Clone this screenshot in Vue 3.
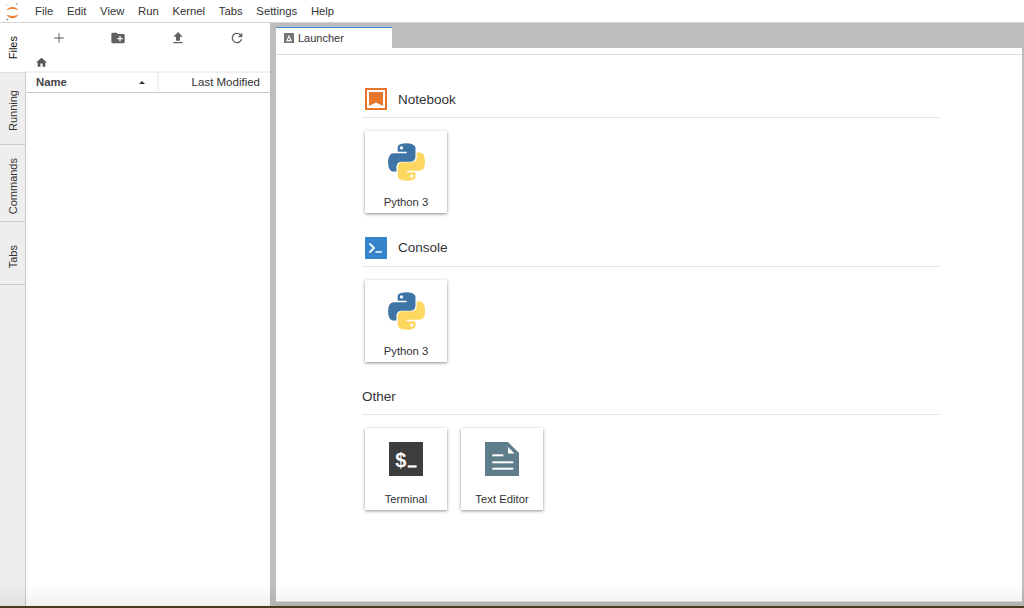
<template>
  <div class="app">
    <header class="menubar">
      <svg class="logo" viewBox="0 0 26 22" width="26" height="22">
        <path d="M6.500 10.500 C8.500 5.800 16.500 5.800 18.500 10.500 C15.500 8.500 9.500 8.500 6.500 10.500Z" fill="#ec8038"/>
        <path d="M6.500 14.300 C8.500 19.500 16.500 19.500 18.500 14.300 C15.500 16.600 9.500 16.600 6.500 14.300Z" fill="#ec8038"/>
        <circle cx="16.700" cy="4" r="0.800" fill="#888"/>
        <circle cx="7.300" cy="19.600" r="0.900" fill="#888"/>
        <circle cx="7" cy="5" r="0.500" fill="#888"/>
      </svg>
      <nav class="menu">
        <span v-for="item in menus" :key="item">{{ item }}</span>
      </nav>
    </header>

    <div class="body">
      <aside class="tabbar">
        <div
          v-for="(tab, i) in sideTabs"
          :key="tab.label"
          class="side-tab"
          :class="{ active: i === 0 }"
          :style="{ height: tab.h + 'px', paddingTop: tab.nudge + 'px' }"
        >
          <span>{{ tab.label }}</span>
        </div>
      </aside>

      <section class="files">
        <div class="toolbar">
          <button>
            <svg viewBox="0 0 24 24" width="16" height="16"><path d="M19 12.700h-6.300V19h-1.400v-6.300H5v-1.400h6.300V5h1.400v6.300H19z" fill="#555"/></svg>
          </button>
          <button>
            <svg viewBox="0 0 24 24" width="16" height="16"><path d="M20 6h-8l-2-2H4c-1.100 0-2 .9-2 2v12c0 1.100.9 2 2 2h16c1.100 0 2-.9 2-2V8c0-1.100-.9-2-2-2zm-1 8h-3v3h-2v-3h-3v-2h3V9h2v3h3v2z" fill="#616161"/></svg>
          </button>
          <button>
            <svg viewBox="0 0 24 24" width="16" height="16"><path d="M9 16h6v-6h4l-7-7-7 7h4zm-4 2h14v2H5z" fill="#616161"/></svg>
          </button>
          <button>
            <svg viewBox="0 0 24 24" width="16" height="16"><path d="M17.650 6.350A7.960 7.960 0 0 0 12 4a8 8 0 1 0 7.730 10h-2.080A6 6 0 1 1 12 6c1.660 0 3.140.69 4.220 1.780L13 11h7V4z" fill="#616161"/></svg>
          </button>
        </div>
        <div class="crumbs">
          <svg viewBox="0 0 24 24" width="13" height="13"><path d="M10 20v-6h4v6h5v-8h3L12 3 2 12h3v8z" fill="#555"/></svg>
        </div>
        <div class="file-head">
          <div class="col-name">
            <span>Name</span>
            <i class="caret"></i>
          </div>
          <div class="col-mod">Last Modified</div>
        </div>
      </section>

      <main class="dock">
        <div class="dock-tabs">
          <div class="dock-tab">
            <svg viewBox="0 0 12 12" width="10" height="10">
              <rect width="12" height="12" fill="#757575"/>
              <path d="M6 2 L9.500 10 H2.500Z M6 5 L4.600 8.400 H7.400Z" fill="#fff" fill-rule="evenodd"/>
            </svg>
            <span>Launcher</span>
          </div>
        </div>
        <div class="launcher">
          <div class="tab-rule"></div>
          <div class="launcher-body">
            <template v-for="section in sections" :key="section.title">
              <div class="section-head">
                <svg v-if="section.icon === 'notebook'" viewBox="0 0 22 22" width="22" height="22" class="section-icon">
                  <rect x="1" y="1" width="20" height="20" fill="#fff" stroke="#e5762c" stroke-width="2"/>
                  <path d="M4 4 H18 V18 L11 14.500 L4 18Z" fill="#e5762c"/>
                </svg>
                <svg v-if="section.icon === 'console'" viewBox="0 0 22 22" width="22" height="22" class="section-icon">
                  <rect width="22" height="22" fill="#3583c9"/>
                  <path d="M4.500 6.500 L9 11 L4.500 15.500" fill="none" stroke="#fff" stroke-width="1.800"/>
                  <rect x="10.500" y="14.200" width="6.500" height="1.500" fill="#fff"/>
                </svg>
                <h2>{{ section.title }}</h2>
              </div>
              <div class="cards">
                <div v-for="card in section.cards" :key="card.label" class="card">
                  <div class="card-icon">
                    <svg v-if="card.icon === 'python'" viewBox="0 0 110 110" width="37" height="38" preserveAspectRatio="none">
                      <path d="M54.900 1C27 1 28.800 13.100 28.800 13.100l0 12.500h26.600v3.800H18.200S.3 27.400.3 55.600s15.600 27.200 15.600 27.200h9.300V69.700s-.5-15.600 15.300-15.600h26.400s14.800.2 14.800-14.300V15.900S83.500 1 54.900 1zM40.300 9.400a4.800 4.800 0 1 1 0 9.600 4.800 4.800 0 0 1 0-9.600z" fill="#3f75a6"/>
                      <path d="M55.700 109c27.900 0 26.100-12.100 26.100-12.100l0-12.500H55.200v-3.800h37.200s17.900 2 17.900-26.200-15.600-27.200-15.600-27.200h-9.300v13.100s.5 15.600-15.300 15.600H43.700s-14.800-.2-14.800 14.300v23.900S27.100 109 55.700 109zm14.600-8.400a4.800 4.800 0 1 1 0-9.600 4.800 4.800 0 0 1 0 9.600z" fill="#fdd75f"/>
                    </svg>
                    <svg v-else-if="card.icon === 'terminal'" viewBox="0 0 34 34" width="34" height="34">
                      <rect width="34" height="34" fill="#3d3d3d"/>
                      <text x="6.200" y="24.500" class="term-glyph">$</text>
                      <rect x="18.700" y="23.300" width="9" height="2.300" fill="#fff"/>
                    </svg>
                    <svg v-else viewBox="0 0 34 34" width="34" height="34">
                      <path d="M0 0 H23 L34 11 V34 H0Z" fill="#607d8b"/>
                      <path d="M23 5 V11.500 H29.500Z" fill="#fff"/>
                      <rect x="7.300" y="12.300" width="11" height="2" fill="#fff"/>
                      <rect x="7.300" y="19.300" width="21" height="2" fill="#fff"/>
                      <rect x="7.300" y="25.700" width="21" height="2" fill="#fff"/>
                    </svg>
                  </div>
                  <div class="card-label">{{ card.label }}</div>
                </div>
              </div>
            </template>
          </div>
        </div>
      </main>
    </div>
    <div class="desktop-strip"></div>
    <div class="bottom-fade"></div>
  </div>
</template>

<script setup>
const menus = ["File", "Edit", "View", "Run", "Kernel", "Tabs", "Settings", "Help"];

const sideTabs = [
  { label: "Files", h: 50, nudge: 1 },
  { label: "Running", h: 72, nudge: 3 },
  { label: "Commands", h: 77, nudge: 7 },
  { label: "Tabs", h: 63, nudge: 7 },
];

const sections = [
  { title: "Notebook", icon: "notebook", cards: [{ label: "Python 3", icon: "python" }] },
  { title: "Console", icon: "console", cards: [{ label: "Python 3", icon: "python" }] },
  {
    title: "Other",
    icon: null,
    cards: [
      { label: "Terminal", icon: "terminal" },
      { label: "Text Editor", icon: "editor" },
    ],
  },
];
</script>

<style>
html,
body {
  margin: 0;
  overflow: hidden;
}
</style>

<style scoped>
.app {
  position: relative;
  width: 1024px;
  height: 608px;
  display: flex;
  flex-direction: column;
  font-family: "Liberation Sans", Arial, sans-serif;
  color: #333;
  background: #fff;
  overflow: hidden;
}

.menubar {
  height: 22px;
  display: flex;
  align-items: center;
  border-bottom: 1px solid #d4d4d4;
  flex-shrink: 0;
}

.logo {
  flex-shrink: 0;
}

.menu {
  display: flex;
  gap: 13.7px;
  padding-left: 9px;
  font-size: 11.3px;
  color: #333;
}

.body {
  flex: 1;
  display: flex;
  min-height: 0;
}

.tabbar {
  width: 25px;
  background: #eee;
  border-right: 1px solid #c8c8c8;
  flex-shrink: 0;
}

.side-tab {
  box-sizing: border-box;
  display: flex;
  align-items: center;
  justify-content: center;
  border-bottom: 1px solid #ccc;
  font-size: 11px;
  color: #333;
}

.side-tab span {
  writing-mode: vertical-rl;
  transform: rotate(180deg);
}

.side-tab.active {
  background: #fff;
  width: 26px;
  border-bottom: 1px solid #ddd;
  color: #111;
}

.files {
  width: 244px;
  background: #fff;
  flex-shrink: 0;
}

.toolbar {
  height: 30px;
  display: flex;
  padding: 0 3px;
  align-items: center;
}

.toolbar button {
  flex: 1;
  height: 30px;
  padding: 0;
  border: 0;
  background: none;
  display: flex;
  align-items: center;
  justify-content: center;
}

.crumbs {
  height: 18px;
  padding-left: 9px;
  display: flex;
  align-items: center;
}

.file-head {
  height: 18px;
  padding-bottom: 1px;
  display: flex;
  border-top: 2px solid #f0f0f0;
  border-bottom: 1px solid #c8c8c8;
  font-size: 11.3px;
}

.col-name {
  width: 133px;
  box-sizing: border-box;
  padding: 0 12px 0 10px;
  display: flex;
  align-items: center;
  justify-content: space-between;
  border-right: 2px solid #f0f0f0;
  font-weight: 700;
  color: #444;
}

.caret {
  width: 0;
  height: 0;
  border-left: 3px solid transparent;
  border-right: 3px solid transparent;
  border-bottom: 3px solid #333;
}

.col-mod {
  flex: 1;
  padding-right: 10px;
  display: flex;
  align-items: center;
  justify-content: flex-end;
  color: #333;
  font-size: 11.5px;
}

.dock {
  flex: 1;
  min-width: 0;
  background: #bdbdbd;
  padding: 4px 2px 4px 6px;
  display: flex;
  flex-direction: column;
}

.dock-tabs {
  height: 21px;
  display: flex;
  flex-shrink: 0;
}

.dock-tab {
  width: 116px;
  box-sizing: border-box;
  background: #fff;
  border-top: 1px solid #3f8fd8;
  display: flex;
  align-items: center;
  gap: 4px;
  padding: 0 0 1px 8px;
  font-size: 11px;
  color: #333;
}

.launcher {
  flex: 1;
  min-height: 0;
  background: #fff;
  border-bottom: 1px solid #ddd;
}

.tab-rule {
  height: 6px;
  border-bottom: 1px solid #ddd;
}

.launcher-body {
  width: 578px;
  margin-left: 86px;
  padding-top: 33px;
}

.section-head {
  display: flex;
  align-items: center;
  box-sizing: border-box;
  height: 30px;
  padding: 0 0 7px;
  border-bottom: 1px solid #e4e4e4;
}

.section-icon {
  margin-left: 3px;
  margin-right: 11px;
}

.section-head h2 {
  margin: 0;
  font-size: 13.5px;
  font-weight: 400;
  color: #333;
}

.cards {
  display: flex;
  gap: 14px;
  padding: 13px 0 23.5px 3px;
}

.card {
  width: 82px;
  height: 82px;
  box-sizing: border-box;
  background: #fff;
  box-shadow: 0 1px 3px rgba(0, 0, 0, 0.45);
  display: flex;
  flex-direction: column;
  align-items: center;
}

.card-icon {
  height: 62px;
  display: flex;
  align-items: center;
  justify-content: center;
}

.card-label {
  margin-top: 3px;
  font-size: 11.3px;
  color: #333;
}

.term-glyph {
  font-family: "Liberation Sans", Arial, sans-serif;
  font-size: 20px;
  font-weight: 700;
  fill: #fff;
}

.desktop-strip {
  height: 2px;
  background: #4a3a20;
  flex-shrink: 0;
}

/* screen edge darkens a little toward the bottom */
.bottom-fade {
  position: absolute;
  left: 0;
  right: 0;
  bottom: 2px;
  height: 22px;
  background: linear-gradient(rgba(0, 0, 0, 0), rgba(0, 0, 0, 0.06));
  pointer-events: none;
}
</style>
